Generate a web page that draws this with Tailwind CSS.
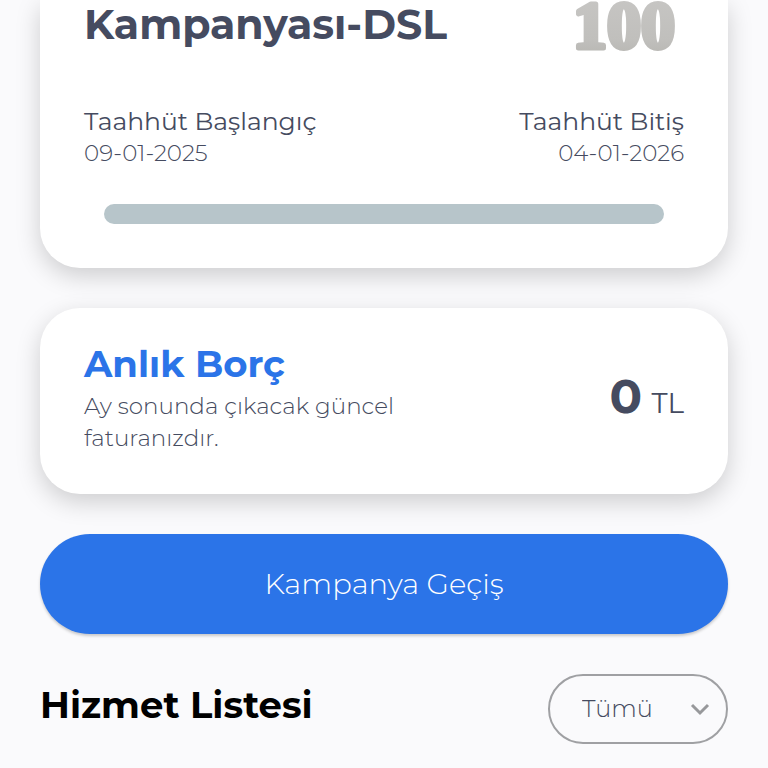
<!DOCTYPE html>
<html lang="tr">
<head>
    <meta charset="UTF-8">
    <meta name="viewport" content="width=device-width, initial-scale=1.0">
    <title>Kampanya</title>
    <script src="https://cdn.jsdelivr.net/npm/@tailwindcss/browser@4"></script>
</head>
<body class="bg-[#fafafc] text-[#454b60] font-['Montserrat','Inter',sans-serif] min-h-screen overflow-x-hidden">

    <main class="px-10 pb-6 flex flex-col gap-10">

        <!-- Taahhüt -->
        <section class="bg-white rounded-b-[40px] shadow-[0_8px_24px_rgba(0,0,0,0.18)] px-11 pb-11">
            <div class="flex justify-between items-start h-[103px]">
                <h1 class="text-[41px] leading-12 font-bold">Kampanyası-DSL</h1>
                <svg class="w-[104px] h-14 mr-2" viewBox="0 0 104 56" role="img" aria-label="100">
                    <defs>
                        <linearGradient id="silver" x1="0" y1="0" x2="0" y2="1">
                            <stop offset="0" stop-color="#c8c7c5"/>
                            <stop offset="0.7" stop-color="#c0bfbc"/>
                            <stop offset="1" stop-color="#b3b2ae"/>
                        </linearGradient>
                    </defs>
                    <text x="1" y="48" font-family="Liberation Serif" font-weight="bold" font-size="68" fill="url(#silver)" stroke="url(#silver)" stroke-width="5" stroke-linejoin="round">100</text>
                </svg>
            </div>
            <div class="flex justify-between">
                <div>
                    <h2 class="text-[25px] leading-9">Taahhüt Başlangıç</h2>
                    <p class="text-[23px] leading-[29px] font-light">09-01-2025</p>
                </div>
                <div class="text-right">
                    <h2 class="text-[25px] leading-9">Taahhüt Bitiş</h2>
                    <p class="text-[23px] leading-[29px] font-light">04-01-2026</p>
                </div>
            </div>
            <div class="mt-9 mx-5 h-5 rounded-full bg-[#b7c5ca]"></div>
        </section>

        <!-- Borç -->
        <section class="bg-white rounded-[40px] shadow-[0_8px_24px_rgba(0,0,0,0.18)] px-11 pt-8 pb-10 flex justify-between items-center">
            <div>
                <h2 class="text-[37px] leading-12 font-bold text-[#2b74e8]">Anlık Borç</h2>
                <p class="mt-[2px] text-[23px] leading-8 font-light max-w-[340px]">Ay sonunda çıkacak güncel faturanızdır.</p>
            </div>
            <p class="pt-1 text-[28px] leading-12"><span class="mr-[2px] text-[48px] font-bold">0</span> TL</p>
        </section>

        <button type="button" class="h-[100px] rounded-full bg-[#2b74e8] text-white text-[29px] font-light shadow-[0_2px_3px_rgba(0,0,0,0.2)]">Kampanya Geçiş</button>

        <!-- Hizmetler -->
        <div class="flex justify-between items-center">
            <h2 id="services" class="pb-2 text-[37px] leading-12 font-bold text-black">Hizmet Listesi</h2>
            <div class="relative">
                <select id="filter" aria-labelledby="services" class="appearance-none w-[180px] h-[70px] pl-8 rounded-full border-2 border-[#9fa0a3] text-[24px] font-light">
                    <option>Tümü</option>
                </select>
                <svg class="absolute right-4 top-6 size-6 pointer-events-none" viewBox="0 0 24 24" fill="none" stroke="#97989b" stroke-width="3">
                    <path d="M4 7l8 8 8-8"/>
                </svg>
            </div>
        </div>
    </main>

</body>
</html>
